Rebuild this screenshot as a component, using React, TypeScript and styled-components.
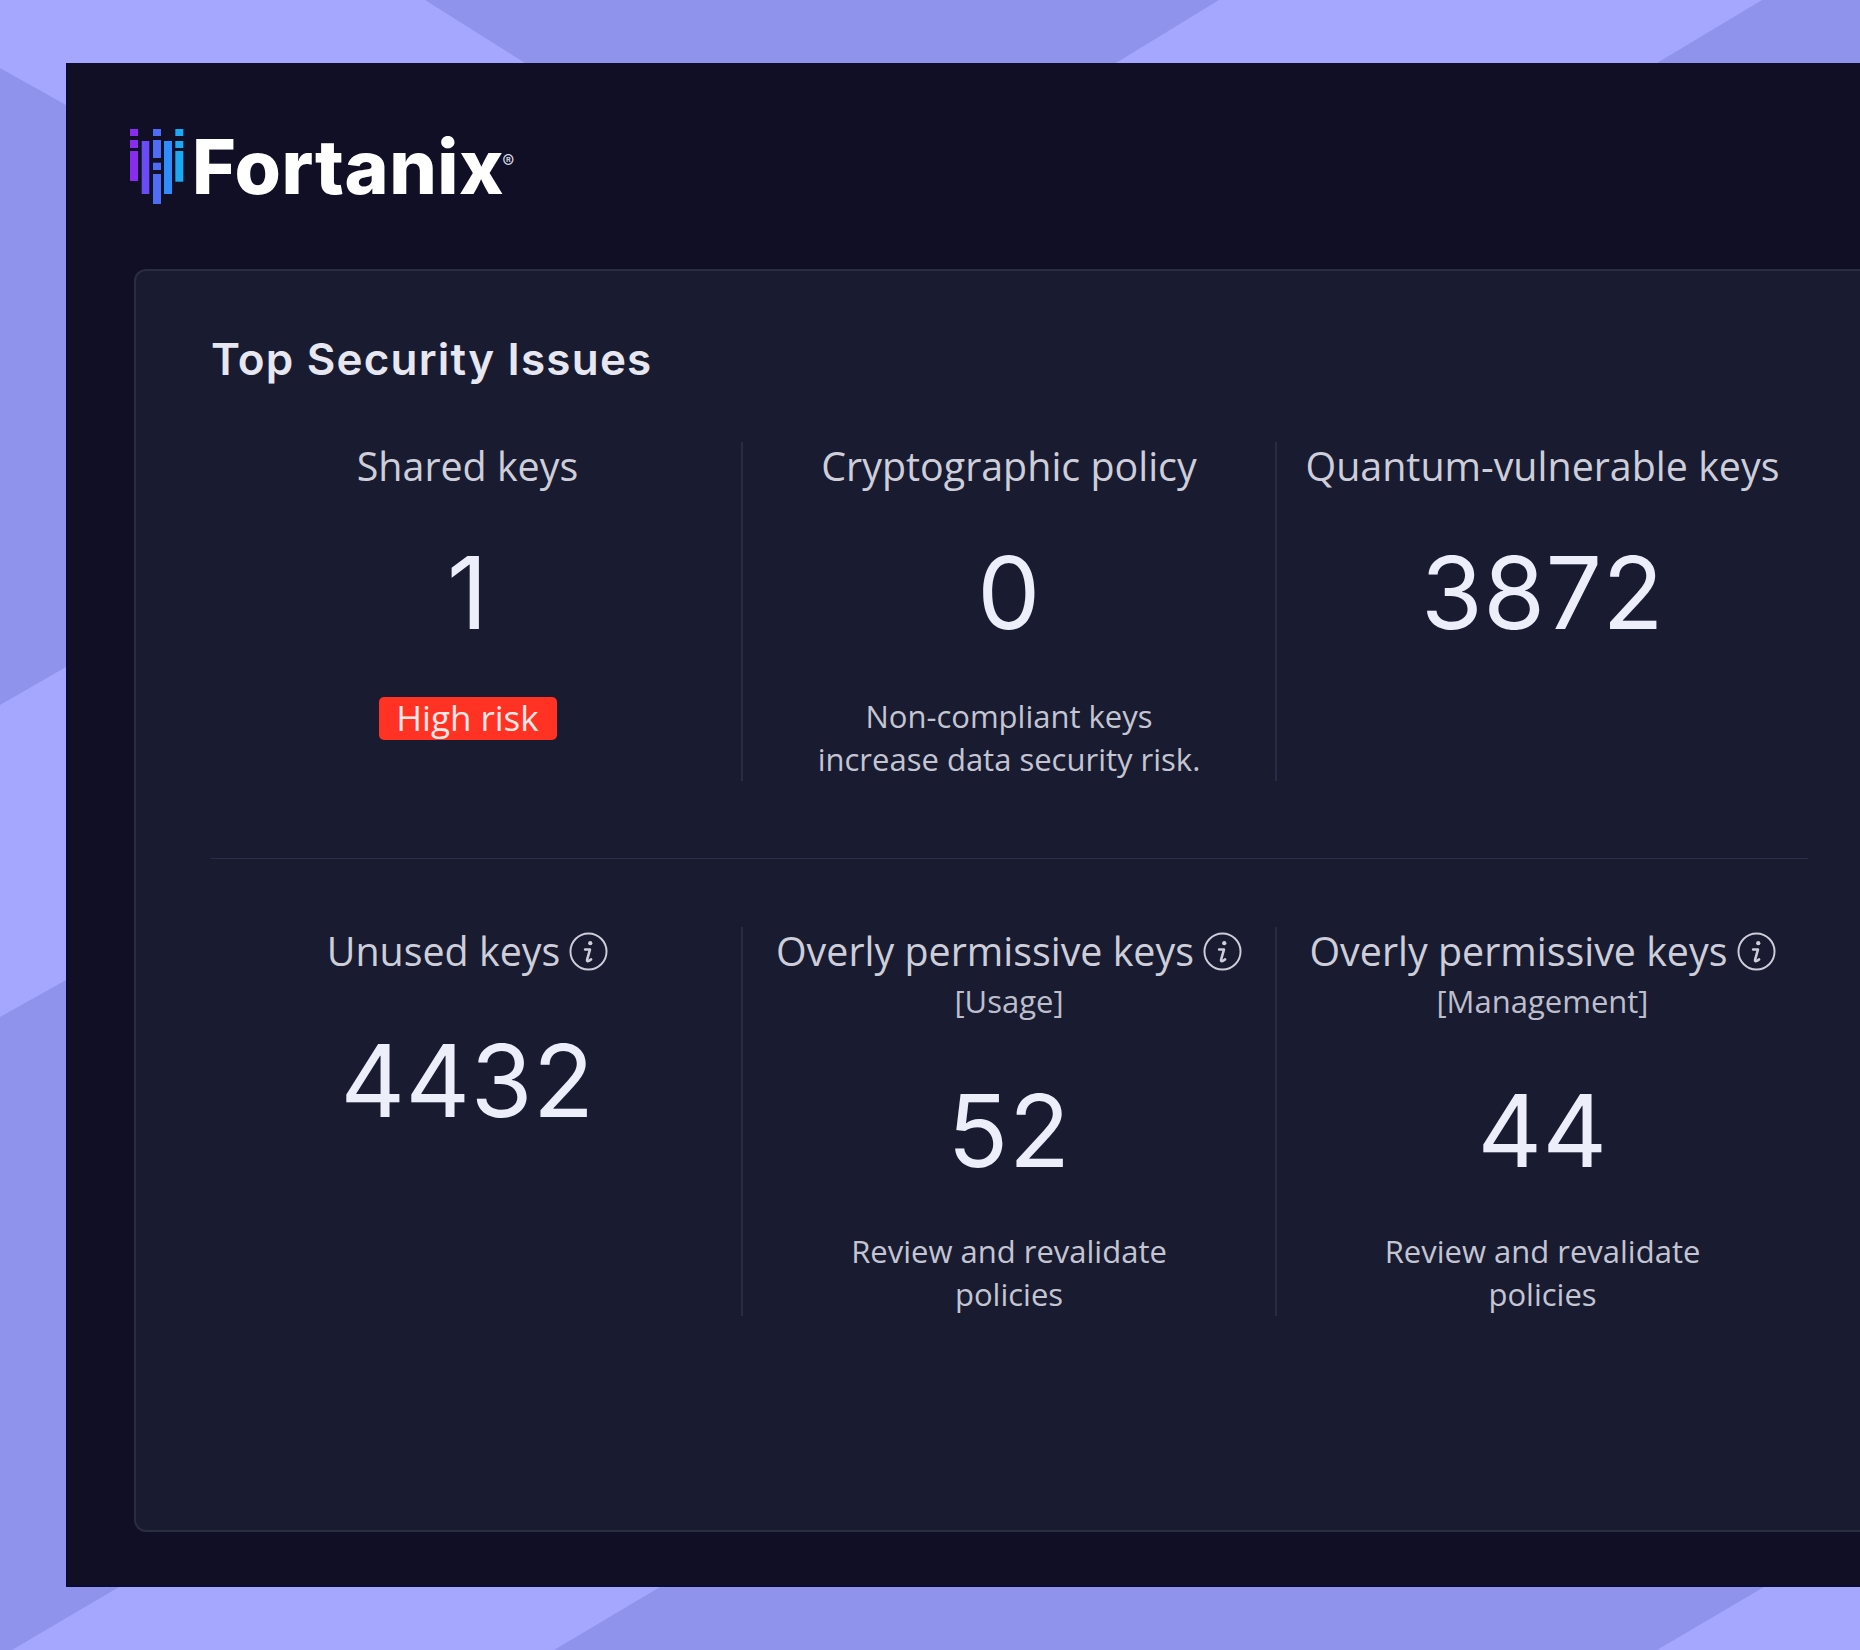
import React from "react";
import styled, { createGlobalStyle } from "styled-components";

const GlobalStyle = createGlobalStyle`
  html, body {
    margin: 0;
    padding: 0;
    background: #a5a7ff;
    overflow: hidden;
  }
`;

const Page = styled.div`
  position: relative;
  display: flex;
  flex-direction: column;
  box-sizing: border-box;
  width: 1860px;
  height: 1650px;
  padding: 63px 0 63px 66px;
  overflow: hidden;
  background: #a5a7ff;
`;

const Backdrop = styled.svg`
  position: absolute;
  top: 0;
  left: 0;
`;

const Panel = styled.main`
  position: relative;
  flex: 1;
  display: flex;
  flex-direction: column;
  padding: 66px 0 55px 68px;
  background: #100f25;
  box-shadow: inset 2px 0 #0b0d30, inset 0 -2px #0b0d30;
`;

const LogoRow = styled.div`
  display: flex;
  align-items: flex-start;
  height: 76px;
  margin: 0 0 64px -4px;
`;

const LogoName = styled.div`
  margin: -7px 0 0 8px;
  font-family: Inter, "Liberation Sans", sans-serif;
  font-size: 75px;
  font-weight: 800;
  line-height: 90px;
  letter-spacing: 0.5px;
  color: #ffffff;
`;

const LogoMark = styled.span`
  display: inline-block;
  margin-left: -2px;
  font-size: 18px;
  font-weight: 400;
  line-height: 1;
  letter-spacing: 0;
  vertical-align: 26px;
  color: #d5d6e2;
`;

const Card = styled.section`
  flex: 1;
  box-sizing: border-box;
  padding: 63px 52px 0 75px;
  background: #191b30;
  border: 2px solid #2a2c40;
  border-right: none;
  border-radius: 12px 0 0 12px;
`;

const Title = styled.h1`
  margin: 0 0 58px;
  font-family: Inter, "Liberation Sans", sans-serif;
  font-size: 44px;
  font-weight: 600;
  line-height: 50px;
  letter-spacing: 1.2px;
  color: #e6e7f1;
`;

const Row = styled.div`
  display: grid;
  grid-template-columns: 547px 534px 1fr;
  margin-left: -17px;
`;

const Cell = styled.div`
  display: flex;
  flex-direction: column;
  align-items: center;
  font-family: "Open Sans", "Liberation Sans", sans-serif;
  text-align: center;

  & + & {
    border-left: 2px solid #2a2c45;
  }
`;

const Heading = styled.div`
  display: flex;
  align-items: center;
  gap: 9px;
  margin-top: -1px;
  font-size: 39.4px;
  line-height: 50px;
  white-space: nowrap;
  color: #cdced9;
`;

const SubHeading = styled.div`
  margin-top: 4px;
  font-size: 31px;
  line-height: 42px;
  color: #bdbecc;
`;

const Count = styled.div<{ $gap: number }>`
  margin-top: ${(p) => p.$gap}px;
  font-family: Inter, "Liberation Sans", sans-serif;
  font-size: 100px;
  font-weight: 400;
  line-height: 100px;
  letter-spacing: 0.5px;
  color: #eceefa;
`;

const Note = styled.div<{ $gap: number }>`
  margin-top: ${(p) => p.$gap}px;
  font-size: 31px;
  line-height: 43px;
  color: #c4c5d2;
`;

const RiskBadge = styled.div`
  margin-top: 54px;
  width: 178px;
  height: 43px;
  border-radius: 5px;
  background: #ff3224;
  font-size: 35px;
  font-weight: 500;
  line-height: 42px;
  color: #ffe9e6;
`;

const Rule = styled.hr`
  height: 1px;
  margin: 77px 0 68px;
  border: none;
  background: #2c2e47;
`;

const InfoIcon = () => (
  <svg width="39" height="39" viewBox="0 0 40 40" fill="none" stroke="#cdced9">
    <circle cx="20" cy="20" r="18.5" strokeWidth="2" />
    <circle cx="21.8" cy="11.5" r="2.2" fill="#cdced9" stroke="none" />
    <path
      d="M16.5 18h5l-3 10.5c-.4 1.5.8 1.8 1.8 1.2l2.4-1.6"
      strokeWidth="2.6"
      strokeLinecap="round"
      strokeLinejoin="round"
    />
  </svg>
);

const FortanixIcon = () => (
  <svg width="54" height="76" viewBox="0 0 54 76">
    <g fill="#8a2cf0">
      <rect x="0" y="0" width="8" height="7" />
      <rect x="0" y="11" width="8" height="8" />
      <rect x="0" y="22" width="8" height="30" />
    </g>
    <rect x="11.7" y="12" width="7.6" height="53" fill="#6a4cf6" />
    <g fill="#4f6cf5">
      <rect x="23" y="0" width="8" height="7" />
      <rect x="23" y="11" width="8" height="18" />
      <rect x="23" y="33.7" width="8" height="7.3" />
      <rect x="23" y="45" width="8" height="30" />
    </g>
    <rect x="34" y="12" width="8" height="53" fill="#2f8cfb" />
    <g fill="#1ba8f5">
      <rect x="45.3" y="0" width="8" height="7" />
      <rect x="45.3" y="12" width="8" height="7" />
      <rect x="45.3" y="22" width="8" height="30.7" />
    </g>
  </svg>
);

const App = () => (
  <Page>
    <GlobalStyle />
    <Backdrop width="1860" height="1650" viewBox="0 0 1860 1650">
      <g fill="#8f93ec">
        <polygon points="425,0 1219,0 1116,63 525,63" />
        <polygon points="1762,0 1860,0 1860,63 1657,63" />
        <polygon points="0,68 66,105 66,667 0,705" />
        <polygon points="0,1017 66,980 66,1587 119,1587 12,1650 0,1650" />
        <polygon points="660,1587 1764,1587 1657,1650 554,1650" />
      </g>
    </Backdrop>
    <Panel>
      <LogoRow>
        <FortanixIcon />
        <LogoName>
          Fortanix<LogoMark>®</LogoMark>
        </LogoName>
      </LogoRow>
      <Card>
        <Title>Top Security Issues</Title>
        <Row>
          <Cell>
            <Heading>Shared keys</Heading>
            <Count $gap={52}>1</Count>
            <RiskBadge>High risk</RiskBadge>
          </Cell>
          <Cell>
            <Heading>Cryptographic policy</Heading>
            <Count $gap={52}>0</Count>
            <Note $gap={52}>
              Non-compliant keys
              <br />
              increase data security risk.
            </Note>
          </Cell>
          <Cell>
            <Heading>Quantum-vulnerable keys</Heading>
            <Count $gap={52}>3872</Count>
          </Cell>
        </Row>
        <Rule />
        <Row>
          <Cell>
            <Heading>
              Unused keys <InfoIcon />
            </Heading>
            <Count $gap={55}>4432</Count>
          </Cell>
          <Cell>
            <Heading>
              Overly permissive keys <InfoIcon />
            </Heading>
            <SubHeading>[Usage]</SubHeading>
            <Count $gap={59}>52</Count>
            <Note $gap={49}>
              Review and revalidate
              <br />
              policies
            </Note>
          </Cell>
          <Cell>
            <Heading>
              Overly permissive keys <InfoIcon />
            </Heading>
            <SubHeading>[Management]</SubHeading>
            <Count $gap={59}>44</Count>
            <Note $gap={49}>
              Review and revalidate
              <br />
              policies
            </Note>
          </Cell>
        </Row>
      </Card>
    </Panel>
  </Page>
);

export default App;
